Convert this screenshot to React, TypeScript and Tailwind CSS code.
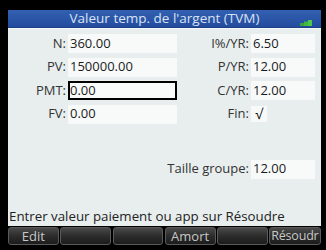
import React from 'react';

const font = { fontFamily: '"Open Sans", "Noto Sans", sans-serif' };

function Field({ value, active = false, width }: { value: string; active?: boolean; width: string }) {
  return (
    <div
      className={`${width} shrink-0 h-[19px] flex items-center text-[13px] text-[#1a1a1a] ${
        active ? 'bg-[#f9fbfb] border-2 border-black' : 'bg-[#f8fafa] pl-[2px]'
      }`}
    >
      {value}
    </div>
  );
}

function Row({
  left,
  leftValue,
  right,
  rightValue,
  active,
  check,
}: {
  left?: string;
  leftValue?: string;
  right: string;
  rightValue?: string;
  active?: boolean;
  check?: boolean;
}) {
  return (
    <div className="flex items-center h-[19px] pr-[6px] whitespace-nowrap">
      <div className="w-[60px] shrink-0 pr-[2px] text-right text-[13px] text-[#333]">{left}</div>
      {leftValue !== undefined ? (
        <Field value={leftValue} active={active} width="w-[109px]" />
      ) : (
        <div className="w-[109px] shrink" />
      )}
      <div className="flex-1 pr-[2px] text-right text-[13px] text-[#333]">{right}</div>
      {check ? (
        <div className="w-[64px] shrink-0 h-[19px] flex items-center">
          <div className="w-[16px] h-[16px] bg-[#f8fafa] flex items-center justify-center text-[14px] text-[#111] leading-none">
            √
          </div>
        </div>
      ) : (
        <Field value={rightValue ?? ''} width="w-[64px]" />
      )}
    </div>
  );
}

function SoftKey({ label, left = false }: { label: string; left?: boolean }) {
  return (
    <div
      className={`flex-1 min-w-0 h-[18px] rounded-[3px] border border-[#5a5a5a] bg-gradient-to-b from-[#4a4a4a] via-[#2c2c2c] to-[#1c1c1c] flex items-center overflow-hidden leading-none whitespace-nowrap text-[#c8c8c8] ${
        left ? 'justify-start pl-px text-[12.5px] tracking-[-0.2px]' : 'justify-center text-[13px]'
      }`}
    >
      {label}
    </div>
  );
}

export default function App() {
  return (
    <div className="w-[326px] h-[250px] bg-black pt-[10px] pl-[8px] overflow-hidden" style={font}>
      <div className="w-[313px] bg-[#e8eeee] flex flex-col h-[216px]">
        <div className="h-[18px] bg-gradient-to-b from-[#3360b2] to-[#244c9e] border-b border-[#1d3f85] relative flex items-center justify-center text-[13.5px] text-[#d9e3f4] leading-none">
          Valeur temp. de l&apos;argent (TVM)
          <svg className="absolute right-[9px] top-[10px]" width="12" height="6" viewBox="0 0 12 6">
            <rect x="0" y="3" width="4" height="3" fill="#3aa43a" />
            <rect x="4" y="1.5" width="4" height="4.5" fill="#42b842" />
            <rect x="8" y="0" width="4" height="6" fill="#4cc84c" />
          </svg>
        </div>
        <div className="h-px bg-[#f4f8f8]" />
        <div className="flex flex-col gap-[4.5px] mt-[5px]">
          <Row left="N:" leftValue="360.00" right="I%/YR:" rightValue="6.50" />
          <Row left="PV:" leftValue="150000.00" right="P/YR:" rightValue="12.00" />
          <Row left="PMT:" leftValue="0.00" right="C/YR:" rightValue="12.00" active />
          <Row left="FV:" leftValue="0.00" right="Fin:" check />
        </div>
        <div className="mt-[36px]">
          <Row right="Taille groupe:" rightValue="12.00" />
        </div>
        <div className="mt-auto pl-[1px] pb-[3px] text-[13.3px] text-[#222] leading-none whitespace-nowrap">
          Entrer valeur paiement ou app sur Résoudre
        </div>
      </div>
      <div className="flex gap-[1.5px] mt-[1px] w-[313px]">
        <SoftKey label="Edit" />
        <SoftKey label="" />
        <SoftKey label="" />
        <SoftKey label="Amort" />
        <SoftKey label="" />
        <SoftKey label="Résoudr" left />
      </div>
    </div>
  );
}
